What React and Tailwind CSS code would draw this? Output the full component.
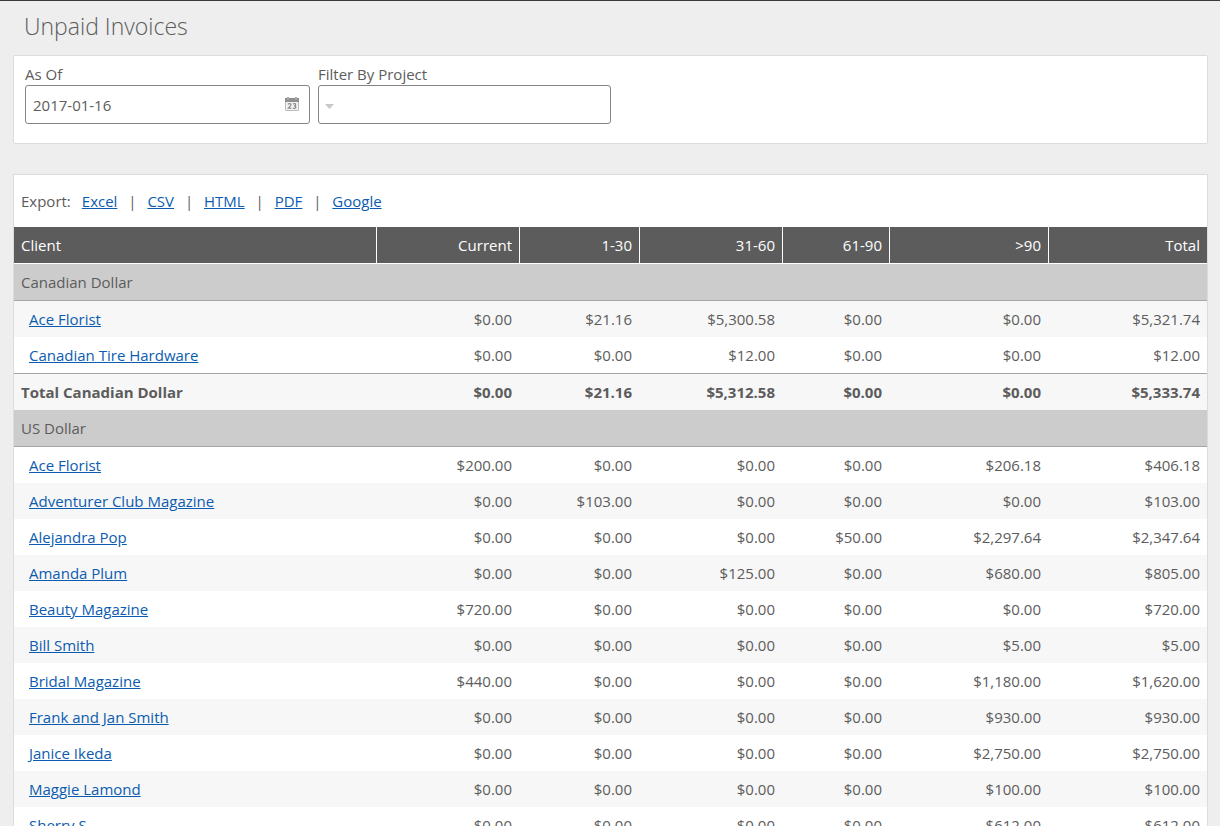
import { useState } from "react";

const columns = [
  { label: "Current", width: "w-[143px]" },
  { label: "1-30", width: "w-[120px]" },
  { label: "31-60", width: "w-[143px]" },
  { label: "61-90", width: "w-[107px]" },
  { label: ">90", width: "w-[159px]" },
  { label: "Total", width: "w-[158px]" },
];

const exportFormats = ["Excel", "CSV", "HTML", "PDF", "Google"];

const rows = [
  { type: "group", name: "Canadian Dollar" },
  { name: "Ace Florist", amounts: ["$0.00", "$21.16", "$5,300.58", "$0.00", "$0.00", "$5,321.74"], shaded: true },
  { name: "Canadian Tire Hardware", amounts: ["$0.00", "$0.00", "$12.00", "$0.00", "$0.00", "$12.00"] },
  { type: "total", name: "Total Canadian Dollar", amounts: ["$0.00", "$21.16", "$5,312.58", "$0.00", "$0.00", "$5,333.74"] },
  { type: "group", name: "US Dollar" },
  { name: "Ace Florist", amounts: ["$200.00", "$0.00", "$0.00", "$0.00", "$206.18", "$406.18"] },
  { name: "Adventurer Club Magazine", amounts: ["$0.00", "$103.00", "$0.00", "$0.00", "$0.00", "$103.00"], shaded: true },
  { name: "Alejandra Pop", amounts: ["$0.00", "$0.00", "$0.00", "$50.00", "$2,297.64", "$2,347.64"] },
  { name: "Amanda Plum", amounts: ["$0.00", "$0.00", "$125.00", "$0.00", "$680.00", "$805.00"], shaded: true },
  { name: "Beauty Magazine", amounts: ["$720.00", "$0.00", "$0.00", "$0.00", "$0.00", "$720.00"] },
  { name: "Bill Smith", amounts: ["$0.00", "$0.00", "$0.00", "$0.00", "$5.00", "$5.00"], shaded: true },
  { name: "Bridal Magazine", amounts: ["$440.00", "$0.00", "$0.00", "$0.00", "$1,180.00", "$1,620.00"] },
  { name: "Frank and Jan Smith", amounts: ["$0.00", "$0.00", "$0.00", "$0.00", "$930.00", "$930.00"], shaded: true },
  { name: "Janice Ikeda", amounts: ["$0.00", "$0.00", "$0.00", "$0.00", "$2,750.00", "$2,750.00"] },
  { name: "Maggie Lamond", amounts: ["$0.00", "$0.00", "$0.00", "$0.00", "$100.00", "$100.00"], shaded: true },
  { name: "Sherry S.", amounts: ["$0.00", "$0.00", "$0.00", "$0.00", "$612.00", "$612.00"] },
];

function CalendarIcon() {
  return (
    <svg width="14" height="14" viewBox="0 0 14 14" fill="none">
      <rect x="0.5" y="1.5" width="13" height="12" rx="0.5" fill="#f1f1f1" stroke="#b9bcbc" />
      <rect x="0" y="1" width="14" height="4" fill="#8f8f8f" />
      <path d="M3 0v2.5M11 0v2.5" stroke="#c9c9c9" strokeWidth="2" />
      <path d="M3 0v2.5M11 0v2.5" stroke="#8a8a8a" />
      <path
        d="M3 7.4C3.6 6.3 6 6.4 6 7.8 6 9 3.6 10.2 3.2 11.2H6.4M8 7.2C8.8 6.4 10.7 6.5 10.7 7.8 10.7 8.6 9.9 8.9 9 8.9 10 8.9 10.9 9.2 10.9 10.1 10.9 11.5 8.8 11.7 7.9 10.9"
        stroke="#8c8c8c"
        strokeWidth="1.2"
      />
    </svg>
  );
}

function Filters() {
  const [asOf, setAsOf] = useState("2017-01-16");
  const [project, setProject] = useState("");

  return (
    <div className="flex gap-2 rounded-xs border border-[#dcdcdc] bg-white px-[11px] pt-2 pb-[19px]">
      <div className="w-[285px]">
        <label htmlFor="as-of" className="block leading-[21px]">
          As Of
        </label>
        <div className="relative">
          <input
            id="as-of"
            type="text"
            value={asOf}
            onChange={(e) => setAsOf(e.target.value)}
            className="block h-[39px] w-full rounded-[3px] border border-[#858585] bg-white pr-8 pl-[7px]"
          />
          <button type="button" aria-label="Open calendar" className="absolute top-3 right-[11px]">
            <CalendarIcon />
          </button>
        </div>
      </div>

      <div className="w-[293px]">
        <label htmlFor="project" className="block leading-[21px]">
          Filter By Project
        </label>
        <div className="relative">
          <select
            id="project"
            value={project}
            onChange={(e) => setProject(e.target.value)}
            className="block h-[39px] w-full appearance-none rounded-[3px] border border-[#858585] bg-white pl-6"
          >
            <option value=""></option>
          </select>
          <svg width="9" height="5" viewBox="0 0 9 5" className="pointer-events-none absolute top-[19px] left-[7px]">
            <path d="M0 0h9L4.5 5z" fill="#c8c8c8" />
          </svg>
        </div>
      </div>
    </div>
  );
}

function ReportRow({ row }) {
  if (row.type === "group") {
    return (
      <tr className="bg-[#cccccc]">
        <td colSpan={7} className="h-[37px] border-b border-[#a6a6a6] px-[7px]">
          {row.name}
        </td>
      </tr>
    );
  }

  if (row.type === "total") {
    return (
      <tr className="bg-[#f7f7f7] font-bold">
        <td className="h-[37px] border-t border-[#a6a6a6] px-[7px]">{row.name}</td>
        {row.amounts.map((amount, i) => (
          <td key={i} className="border-t border-[#a6a6a6] pr-2 pl-[7px] text-right last:pr-[7px]">
            {amount}
          </td>
        ))}
      </tr>
    );
  }

  return (
    <tr className={row.shaded ? "bg-[#f7f7f7]" : "bg-white"}>
      <td className="h-9 pr-[7px] pl-[15px]">
        <a href="#" className="text-[#0b5cb0] underline">
          {row.name}
        </a>
      </td>
      {row.amounts.map((amount, i) => (
        <td key={i} className="pr-2 pl-[7px] text-right last:pr-[7px]">
          {amount}
        </td>
      ))}
    </tr>
  );
}

export default function App() {
  return (
    <div className="h-screen overflow-hidden border-t border-[#3a3a3c] bg-[#eeeeee] pr-3 pl-[13px] font-['Open_Sans',sans-serif] text-[15px] leading-5 text-[#5c5c5c]">
      <h1 className="px-[11px] pt-2 pb-3 text-[23px] leading-[34px] font-light">Unpaid Invoices</h1>

      <Filters />

      <div className="mt-[30px] border border-[#dcdcdc] bg-white">
        <div className="flex items-center px-[7px] py-4">
          <span className="mr-[11px]">Export:</span>
          {exportFormats.map((format, i) => (
            <span key={format} className="flex">
              {i > 0 && <span className="w-[30px] text-center">|</span>}
              <a href="#" className="text-[#0b5cb0] underline">
                {format}
              </a>
            </span>
          ))}
        </div>

        <table className="w-full table-fixed border-separate border-spacing-0">
          <thead>
            <tr className="bg-[#5c5c5c] text-white">
              <th className="h-[37px] border-r border-b border-white px-[7px] text-left font-medium">Client</th>
              {columns.map((col) => (
                <th
                  key={col.label}
                  className={`${col.width} border-r border-b border-white px-[7px] text-right font-medium last:border-r-0`}
                >
                  {col.label}
                </th>
              ))}
            </tr>
          </thead>
          <tbody>
            {rows.map((row, i) => (
              <ReportRow key={i} row={row} />
            ))}
          </tbody>
        </table>
      </div>
    </div>
  );
}
